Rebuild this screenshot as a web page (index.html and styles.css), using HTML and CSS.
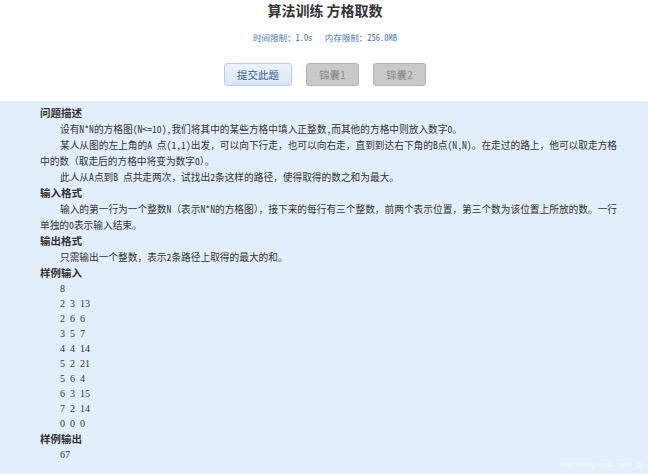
FILE: index.html
```html
<!DOCTYPE html>
<html lang="zh-CN">
<head>
  <meta charset="UTF-8" />
  <title>算法训练 方格取数</title>
  <link rel="stylesheet" href="styles.css">
</head>
<body>
  <div class="header">
    <h1>算法训练 方格取数</h1>
    <div class="limits">时间限制：1.0s<span class="gap"></span>内存限制：256.0MB</div>
    <div class="actions">
      <button class="submit-btn">提交此题</button>
      <button class="tip-btn">锦囊1</button>
      <button class="tip-btn">锦囊2</button>
    </div>
  </div>

  <div class="problem">
    <div class="title">问题描述</div>
    <p>设有N*N的方格图(N&lt;=10),我们将其中的某些方格中填入正整数,而其他的方格中则放入数字0。</p>
    <p>某人从图的左上角的A 点(1,1)出发，可以向下行走，也可以向右走，直到到达右下角的B点(N,N)。在走过的路上，他可以取走方格中的数（取走后的方格中将变为数字0）。</p>
    <p>此人从A点到B 点共走两次，试找出2条这样的路径，使得取得的数之和为最大。</p>

    <div class="title">输入格式</div>
    <p>输入的第一行为一个整数N（表示N*N的方格图），接下来的每行有三个整数，前两个表示位置，第三个数为该位置上所放的数。一行单独的0表示输入结束。</p>

    <div class="title">输出格式</div>
    <p>只需输出一个整数，表示2条路径上取得的最大的和。</p>

    <div class="title">样例输入</div>
    <div class="sample">8<br>2 3 13<br>2 6 6<br>3 5 7<br>4 4 14<br>5 2 21<br>5 6 4<br>6 3 15<br>7 2 14<br>0 0 0</div>

    <div class="title">样例输出</div>
    <div class="sample">67</div>

    <span class="mark">http://blog.csdn.net/l_zj</span>
  </div>
</body>
</html>
```

FILE: styles.css
```css
body {
  margin: 0;
  font-family: "Noto Sans Mono CJK SC", "Liberation Serif", "Noto Sans CJK SC", serif;
  color: #333;
  background-color: #fff;
}

.header {
  text-align: center;
}

h1 {
  margin: 0;
  padding-top: 1px;
  font-family: "Noto Sans CJK SC", sans-serif;
  font-size: 14px;
  line-height: 18px;
  color: #333;
}

.limits {
  margin-top: 12px;
  font-size: 8.5px;
  line-height: 12px;
  color: #4a74b4;
}

.limits .gap {
  display: inline-block;
  width: 12px;
}

.actions {
  display: flex;
  justify-content: center;
  gap: 14px;
  margin-top: 20px;
}

.actions button {
  height: 23px;
  padding: 0;
  font-family: "Noto Sans CJK SC", sans-serif;
  font-size: 10.5px;
  border-radius: 3px;
  cursor: pointer;
}

.submit-btn {
  width: 68px;
  color: #3a5f94;
  background: linear-gradient(#edf3fc, #d8e5f6);
  border: 1px solid #b9cde8;
}

.tip-btn {
  width: 53px;
  color: #8a8a8a;
  background-color: #c9c9c9;
  border: 1px solid #b3b3b3;
}

.problem {
  position: relative;
  width: 648px;
  margin-top: 15px;
  padding: 4px 26px 16px 40px;
  box-sizing: border-box;
  background-color: #e3eefd;
  font-size: 9.7px;
  line-height: 16px;
}

.title {
  font-family: "Noto Sans CJK SC", sans-serif;
  font-size: 10.5px;
  font-weight: bold;
  color: #333;
}

.problem p {
  margin: 0;
  text-indent: 20px;
}

.sample {
  padding-left: 20px;
  font-family: "Liberation Serif", serif;
  font-size: 10px;
  line-height: 15px;
  word-spacing: 0.25em;
}

.mark {
  position: absolute;
  right: 6px;
  bottom: 8px;
  font-family: "Liberation Sans", sans-serif;
  font-size: 8px;
  line-height: 10px;
  color: #f2f7fe;
}
```
